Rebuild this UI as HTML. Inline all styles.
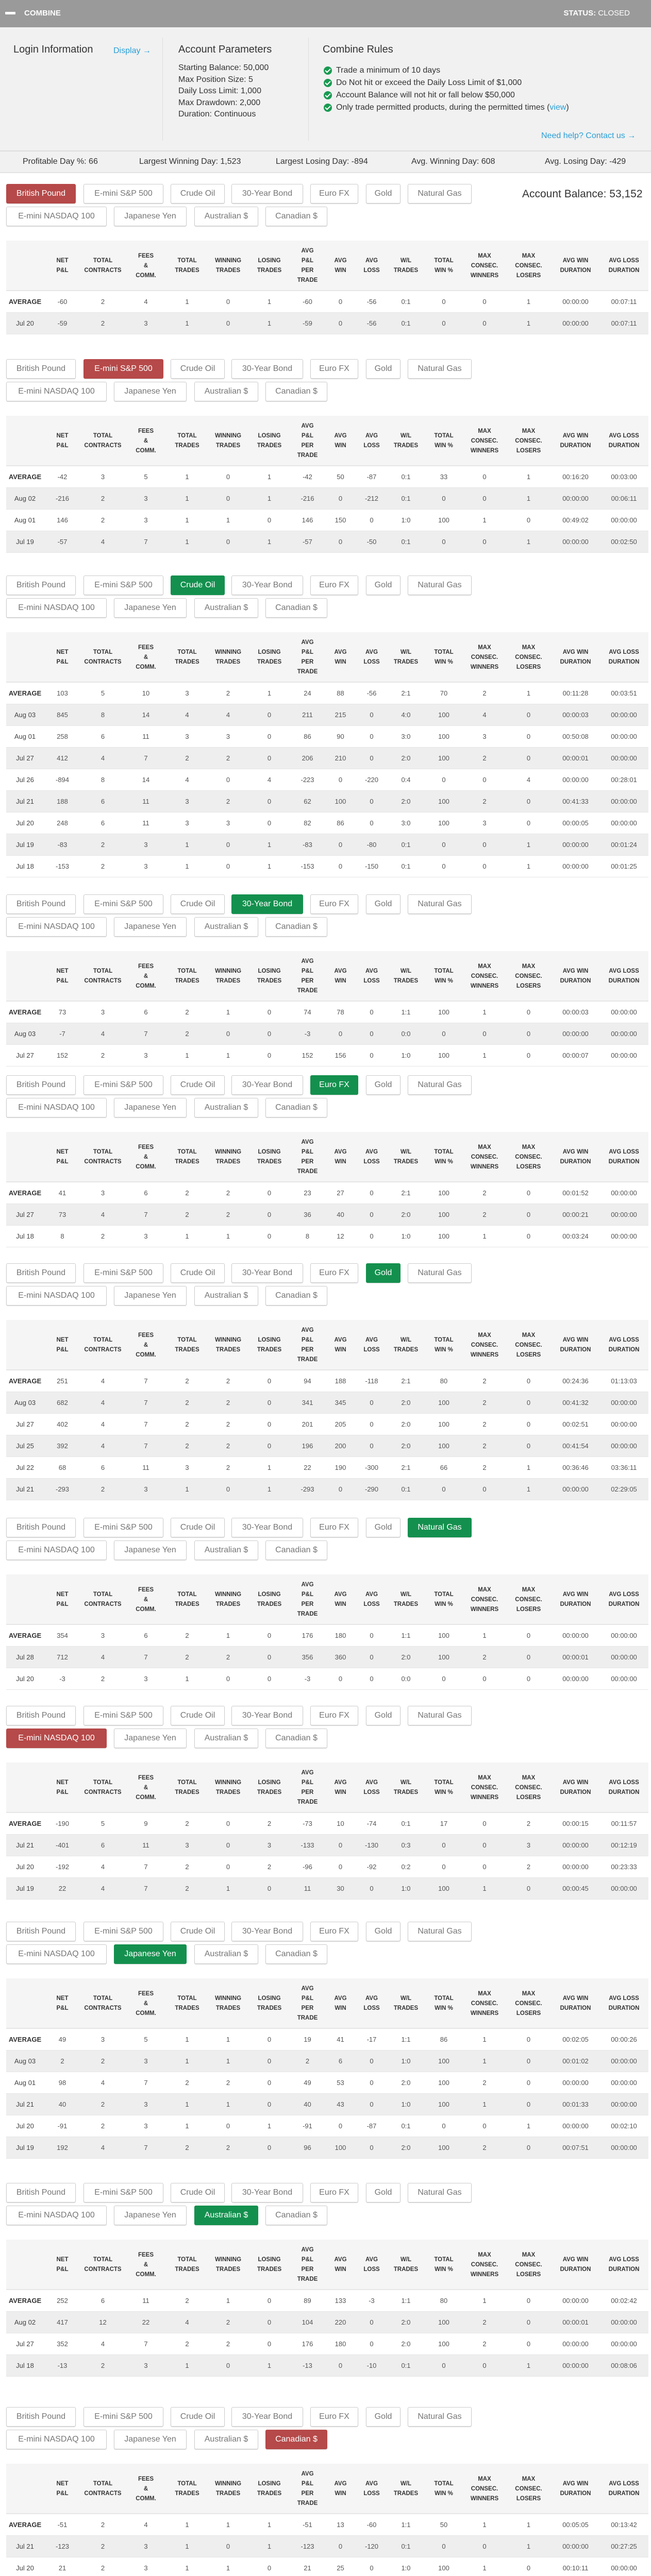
<!DOCTYPE html>
<html><head><meta charset="utf-8">
<style>
*{box-sizing:border-box;margin:0;padding:0}
html{width:1263px;height:5029px;overflow:hidden}
body{width:1263px;height:5029px;position:relative;background:#fff;font-family:"Liberation Sans",Arial,sans-serif;color:#333;overflow:hidden}
.hdr{position:absolute;left:0;top:0;width:1263px;height:53px;background:#9a9a9a;color:#fff}
.hdr .minus{position:absolute;left:10px;top:23px;width:20px;height:5px;background:#fff;border-radius:1px}
.hdr .t{position:absolute;left:47px;top:17px;font-size:15px;font-weight:bold}
.hdr .s{position:absolute;right:41px;top:17px;font-size:15px}
.info{position:absolute;left:0;top:53px;width:1263px;height:239px;background:#f1f1f1}
.vl{position:absolute;width:1px;height:200px;background:#ddd}
.h3{position:absolute;font-size:20px;color:#333}
.lnk{color:#2a9fd6}
.ap{position:absolute;left:346px;top:68px;font-size:16px;line-height:22.5px;color:#333}
.rules{position:absolute;left:628px;top:72px;font-size:16px;line-height:24px;white-space:nowrap}
.rules div{position:relative;padding-left:24px}
.ck{position:absolute;left:0;top:4px;width:16px;height:16px;border-radius:50%;background:#1a9a52}
.ck:after{content:"";position:absolute;left:5px;top:2px;width:4px;height:8px;border:solid #fff;border-width:0 2px 2px 0;transform:rotate(45deg)}
.stats{position:absolute;left:0;top:292px;width:1263px;height:44px;background:#f1f1f1;border-top:2px solid #ddd;border-bottom:2px solid #e3e3e3;font-size:16px}
.stats span{position:absolute;top:11px}
.sec{position:absolute;left:0;width:1263px}
.b{position:absolute;height:38px;border:1px solid #ccc;border-radius:3px;background:#fff;color:#777;font-size:16px;line-height:36px;text-align:center;box-shadow:0 1px 1px rgba(0,0,0,.15)}
.b.r{background:#b64949;border-color:#b64949;color:#fff}
.b.g{background:#14904e;border-color:#14904e;color:#fff}
.bal{position:absolute;left:1013px;top:8px;font-size:21px;color:#333}
table{position:absolute;left:12px;top:110px;width:1246px;border-collapse:separate;border-spacing:0;table-layout:fixed}
tr.h{height:98px}
tr{height:42px}
th{height:98px;padding:0;background:#f5f5f5;font-size:11.5px;font-weight:bold;line-height:19px;text-align:center;vertical-align:middle;box-shadow:inset 0 -2px #e6e6e6;color:#333;border:0}
td{height:42px;padding:0;font-size:13px;line-height:16px;text-align:center;vertical-align:middle;color:#555;box-shadow:inset 0 -1px #e6e6e6;border:0}
tr.e td{background:#eee}
td:first-child{color:#444}
tr.a td:first-child{font-weight:bold;color:#333}
</style></head><body>
<div class="hdr"><div class="minus"></div><div class="t">COMBINE</div><div class="s"><b>STATUS:</b> CLOSED</div></div>
<div class="info">
<div class="h3" style="left:26px;top:32px">Login Information</div>
<div class="lnk" style="position:absolute;left:220px;top:37px;font-size:16px">Display →</div>
<div class="vl" style="left:315px;top:20px"></div>
<div class="vl" style="left:598px;top:20px"></div>
<div class="h3" style="left:346px;top:32px">Account Parameters</div>
<div class="ap">Starting Balance: 50,000<br>Max Position Size: 5<br>Daily Loss Limit: 1,000<br>Max Drawdown: 2,000<br>Duration: Continuous</div>
<div class="h3" style="left:626px;top:32px">Combine Rules</div>
<div class="rules">
<div><span class="ck"></span>Trade a minimum of 10 days</div>
<div><span class="ck"></span>Do Not hit or exceed the Daily Loss Limit of $1,000</div>
<div><span class="ck"></span>Account Balance will not hit or fall below $50,000</div>
<div><span class="ck"></span>Only trade permitted products, during the permitted times (<span class="lnk">view</span>)</div>
</div>
<div class="lnk" style="position:absolute;left:1050px;top:202px;font-size:16px">Need help? Contact us →</div>
</div>
<div class="stats"><span style="left:44px">Profitable Day %: 66</span><span style="left:270px">Largest Winning Day: 1,523</span><span style="left:535px">Largest Losing Day: -894</span><span style="left:798px">Avg. Winning Day: 608</span><span style="left:1057px">Avg. Losing Day: -429</span></div>

<div class="sec" style="top:357px">
<div class="b r" style="left:12px;top:0;width:135px">British Pound</div><div class="b" style="left:162px;top:0;width:155px">E-mini S&amp;P 500</div><div class="b" style="left:331px;top:0;width:105px">Crude Oil</div><div class="b" style="left:449px;top:0;width:139px">30-Year Bond</div><div class="b" style="left:602px;top:0;width:93px">Euro FX</div><div class="b" style="left:710px;top:0;width:67px">Gold</div><div class="b" style="left:791px;top:0;width:124px">Natural Gas</div>
<div class="b" style="left:12px;top:44px;width:195px">E-mini NASDAQ 100</div><div class="b" style="left:221px;top:44px;width:141px">Japanese Yen</div><div class="b" style="left:377px;top:44px;width:124px">Australian $</div><div class="b" style="left:515px;top:44px;width:120px">Canadian $</div>
<div class="bal">Account Balance: 53,152</div>
<table><colgroup><col style="width:73px"><col style="width:72px"><col style="width:85px"><col style="width:82px"><col style="width:78px"><col style="width:81px"><col style="width:79px"><col style="width:69px"><col style="width:59px"><col style="width:62px"><col style="width:71px"><col style="width:76px"><col style="width:82px"><col style="width:89px"><col style="width:93px"><col style="width:95px"></colgroup>
<tr class="h"><th></th><th>NET<br>P&amp;L</th><th>TOTAL<br>CONTRACTS</th><th>FEES<br>&amp;<br>COMM.</th><th>TOTAL<br>TRADES</th><th>WINNING<br>TRADES</th><th>LOSING<br>TRADES</th><th>AVG<br>P&amp;L<br>PER<br>TRADE</th><th>AVG<br>WIN</th><th>AVG<br>LOSS</th><th>W/L<br>TRADES</th><th>TOTAL<br>WIN %</th><th>MAX<br>CONSEC.<br>WINNERS</th><th>MAX<br>CONSEC.<br>LOSERS</th><th>AVG WIN<br>DURATION</th><th>AVG LOSS<br>DURATION</th></tr>
<tr class="a"><td>AVERAGE</td><td>-60</td><td>2</td><td>4</td><td>1</td><td>0</td><td>1</td><td>-60</td><td>0</td><td>-56</td><td>0:1</td><td>0</td><td>0</td><td>1</td><td>00:00:00</td><td>00:07:11</td></tr>
<tr class="e"><td>Jul 20</td><td>-59</td><td>2</td><td>3</td><td>1</td><td>0</td><td>1</td><td>-59</td><td>0</td><td>-56</td><td>0:1</td><td>0</td><td>0</td><td>1</td><td>00:00:00</td><td>00:07:11</td></tr>
</table></div>

<div class="sec" style="top:697px">
<div class="b" style="left:12px;top:0;width:135px">British Pound</div><div class="b r" style="left:162px;top:0;width:155px">E-mini S&amp;P 500</div><div class="b" style="left:331px;top:0;width:105px">Crude Oil</div><div class="b" style="left:449px;top:0;width:139px">30-Year Bond</div><div class="b" style="left:602px;top:0;width:93px">Euro FX</div><div class="b" style="left:710px;top:0;width:67px">Gold</div><div class="b" style="left:791px;top:0;width:124px">Natural Gas</div>
<div class="b" style="left:12px;top:44px;width:195px">E-mini NASDAQ 100</div><div class="b" style="left:221px;top:44px;width:141px">Japanese Yen</div><div class="b" style="left:377px;top:44px;width:124px">Australian $</div><div class="b" style="left:515px;top:44px;width:120px">Canadian $</div>
<table><colgroup><col style="width:73px"><col style="width:72px"><col style="width:85px"><col style="width:82px"><col style="width:78px"><col style="width:81px"><col style="width:79px"><col style="width:69px"><col style="width:59px"><col style="width:62px"><col style="width:71px"><col style="width:76px"><col style="width:82px"><col style="width:89px"><col style="width:93px"><col style="width:95px"></colgroup>
<tr class="h"><th></th><th>NET<br>P&amp;L</th><th>TOTAL<br>CONTRACTS</th><th>FEES<br>&amp;<br>COMM.</th><th>TOTAL<br>TRADES</th><th>WINNING<br>TRADES</th><th>LOSING<br>TRADES</th><th>AVG<br>P&amp;L<br>PER<br>TRADE</th><th>AVG<br>WIN</th><th>AVG<br>LOSS</th><th>W/L<br>TRADES</th><th>TOTAL<br>WIN %</th><th>MAX<br>CONSEC.<br>WINNERS</th><th>MAX<br>CONSEC.<br>LOSERS</th><th>AVG WIN<br>DURATION</th><th>AVG LOSS<br>DURATION</th></tr>
<tr class="a"><td>AVERAGE</td><td>-42</td><td>3</td><td>5</td><td>1</td><td>0</td><td>1</td><td>-42</td><td>50</td><td>-87</td><td>0:1</td><td>33</td><td>0</td><td>1</td><td>00:16:20</td><td>00:03:00</td></tr>
<tr class="e"><td>Aug 02</td><td>-216</td><td>2</td><td>3</td><td>1</td><td>0</td><td>1</td><td>-216</td><td>0</td><td>-212</td><td>0:1</td><td>0</td><td>0</td><td>1</td><td>00:00:00</td><td>00:06:11</td></tr>
<tr><td>Aug 01</td><td>146</td><td>2</td><td>3</td><td>1</td><td>1</td><td>0</td><td>146</td><td>150</td><td>0</td><td>1:0</td><td>100</td><td>1</td><td>0</td><td>00:49:02</td><td>00:00:00</td></tr>
<tr class="e"><td>Jul 19</td><td>-57</td><td>4</td><td>7</td><td>1</td><td>0</td><td>1</td><td>-57</td><td>0</td><td>-50</td><td>0:1</td><td>0</td><td>0</td><td>1</td><td>00:00:00</td><td>00:02:50</td></tr>
</table></div>

<div class="sec" style="top:1117px">
<div class="b" style="left:12px;top:0;width:135px">British Pound</div><div class="b" style="left:162px;top:0;width:155px">E-mini S&amp;P 500</div><div class="b g" style="left:331px;top:0;width:105px">Crude Oil</div><div class="b" style="left:449px;top:0;width:139px">30-Year Bond</div><div class="b" style="left:602px;top:0;width:93px">Euro FX</div><div class="b" style="left:710px;top:0;width:67px">Gold</div><div class="b" style="left:791px;top:0;width:124px">Natural Gas</div>
<div class="b" style="left:12px;top:44px;width:195px">E-mini NASDAQ 100</div><div class="b" style="left:221px;top:44px;width:141px">Japanese Yen</div><div class="b" style="left:377px;top:44px;width:124px">Australian $</div><div class="b" style="left:515px;top:44px;width:120px">Canadian $</div>
<table><colgroup><col style="width:73px"><col style="width:72px"><col style="width:85px"><col style="width:82px"><col style="width:78px"><col style="width:81px"><col style="width:79px"><col style="width:69px"><col style="width:59px"><col style="width:62px"><col style="width:71px"><col style="width:76px"><col style="width:82px"><col style="width:89px"><col style="width:93px"><col style="width:95px"></colgroup>
<tr class="h"><th></th><th>NET<br>P&amp;L</th><th>TOTAL<br>CONTRACTS</th><th>FEES<br>&amp;<br>COMM.</th><th>TOTAL<br>TRADES</th><th>WINNING<br>TRADES</th><th>LOSING<br>TRADES</th><th>AVG<br>P&amp;L<br>PER<br>TRADE</th><th>AVG<br>WIN</th><th>AVG<br>LOSS</th><th>W/L<br>TRADES</th><th>TOTAL<br>WIN %</th><th>MAX<br>CONSEC.<br>WINNERS</th><th>MAX<br>CONSEC.<br>LOSERS</th><th>AVG WIN<br>DURATION</th><th>AVG LOSS<br>DURATION</th></tr>
<tr class="a"><td>AVERAGE</td><td>103</td><td>5</td><td>10</td><td>3</td><td>2</td><td>1</td><td>24</td><td>88</td><td>-56</td><td>2:1</td><td>70</td><td>2</td><td>1</td><td>00:11:28</td><td>00:03:51</td></tr>
<tr class="e"><td>Aug 03</td><td>845</td><td>8</td><td>14</td><td>4</td><td>4</td><td>0</td><td>211</td><td>215</td><td>0</td><td>4:0</td><td>100</td><td>4</td><td>0</td><td>00:00:03</td><td>00:00:00</td></tr>
<tr><td>Aug 01</td><td>258</td><td>6</td><td>11</td><td>3</td><td>3</td><td>0</td><td>86</td><td>90</td><td>0</td><td>3:0</td><td>100</td><td>3</td><td>0</td><td>00:50:08</td><td>00:00:00</td></tr>
<tr class="e"><td>Jul 27</td><td>412</td><td>4</td><td>7</td><td>2</td><td>2</td><td>0</td><td>206</td><td>210</td><td>0</td><td>2:0</td><td>100</td><td>2</td><td>0</td><td>00:00:01</td><td>00:00:00</td></tr>
<tr><td>Jul 26</td><td>-894</td><td>8</td><td>14</td><td>4</td><td>0</td><td>4</td><td>-223</td><td>0</td><td>-220</td><td>0:4</td><td>0</td><td>0</td><td>4</td><td>00:00:00</td><td>00:28:01</td></tr>
<tr class="e"><td>Jul 21</td><td>188</td><td>6</td><td>11</td><td>3</td><td>2</td><td>0</td><td>62</td><td>100</td><td>0</td><td>2:0</td><td>100</td><td>2</td><td>0</td><td>00:41:33</td><td>00:00:00</td></tr>
<tr><td>Jul 20</td><td>248</td><td>6</td><td>11</td><td>3</td><td>3</td><td>0</td><td>82</td><td>86</td><td>0</td><td>3:0</td><td>100</td><td>3</td><td>0</td><td>00:00:05</td><td>00:00:00</td></tr>
<tr class="e"><td>Jul 19</td><td>-83</td><td>2</td><td>3</td><td>1</td><td>0</td><td>1</td><td>-83</td><td>0</td><td>-80</td><td>0:1</td><td>0</td><td>0</td><td>1</td><td>00:00:00</td><td>00:01:24</td></tr>
<tr><td>Jul 18</td><td>-153</td><td>2</td><td>3</td><td>1</td><td>0</td><td>1</td><td>-153</td><td>0</td><td>-150</td><td>0:1</td><td>0</td><td>0</td><td>1</td><td>00:00:00</td><td>00:01:25</td></tr>
</table></div>

<div class="sec" style="top:1736px">
<div class="b" style="left:12px;top:0;width:135px">British Pound</div><div class="b" style="left:162px;top:0;width:155px">E-mini S&amp;P 500</div><div class="b" style="left:331px;top:0;width:105px">Crude Oil</div><div class="b g" style="left:449px;top:0;width:139px">30-Year Bond</div><div class="b" style="left:602px;top:0;width:93px">Euro FX</div><div class="b" style="left:710px;top:0;width:67px">Gold</div><div class="b" style="left:791px;top:0;width:124px">Natural Gas</div>
<div class="b" style="left:12px;top:44px;width:195px">E-mini NASDAQ 100</div><div class="b" style="left:221px;top:44px;width:141px">Japanese Yen</div><div class="b" style="left:377px;top:44px;width:124px">Australian $</div><div class="b" style="left:515px;top:44px;width:120px">Canadian $</div>
<table><colgroup><col style="width:73px"><col style="width:72px"><col style="width:85px"><col style="width:82px"><col style="width:78px"><col style="width:81px"><col style="width:79px"><col style="width:69px"><col style="width:59px"><col style="width:62px"><col style="width:71px"><col style="width:76px"><col style="width:82px"><col style="width:89px"><col style="width:93px"><col style="width:95px"></colgroup>
<tr class="h"><th></th><th>NET<br>P&amp;L</th><th>TOTAL<br>CONTRACTS</th><th>FEES<br>&amp;<br>COMM.</th><th>TOTAL<br>TRADES</th><th>WINNING<br>TRADES</th><th>LOSING<br>TRADES</th><th>AVG<br>P&amp;L<br>PER<br>TRADE</th><th>AVG<br>WIN</th><th>AVG<br>LOSS</th><th>W/L<br>TRADES</th><th>TOTAL<br>WIN %</th><th>MAX<br>CONSEC.<br>WINNERS</th><th>MAX<br>CONSEC.<br>LOSERS</th><th>AVG WIN<br>DURATION</th><th>AVG LOSS<br>DURATION</th></tr>
<tr class="a"><td>AVERAGE</td><td>73</td><td>3</td><td>6</td><td>2</td><td>1</td><td>0</td><td>74</td><td>78</td><td>0</td><td>1:1</td><td>100</td><td>1</td><td>0</td><td>00:00:03</td><td>00:00:00</td></tr>
<tr class="e"><td>Aug 03</td><td>-7</td><td>4</td><td>7</td><td>2</td><td>0</td><td>0</td><td>-3</td><td>0</td><td>0</td><td>0:0</td><td>0</td><td>0</td><td>0</td><td>00:00:00</td><td>00:00:00</td></tr>
<tr><td>Jul 27</td><td>152</td><td>2</td><td>3</td><td>1</td><td>1</td><td>0</td><td>152</td><td>156</td><td>0</td><td>1:0</td><td>100</td><td>1</td><td>0</td><td>00:00:07</td><td>00:00:00</td></tr>
</table></div>

<div class="sec" style="top:2087px">
<div class="b" style="left:12px;top:0;width:135px">British Pound</div><div class="b" style="left:162px;top:0;width:155px">E-mini S&amp;P 500</div><div class="b" style="left:331px;top:0;width:105px">Crude Oil</div><div class="b" style="left:449px;top:0;width:139px">30-Year Bond</div><div class="b g" style="left:602px;top:0;width:93px">Euro FX</div><div class="b" style="left:710px;top:0;width:67px">Gold</div><div class="b" style="left:791px;top:0;width:124px">Natural Gas</div>
<div class="b" style="left:12px;top:44px;width:195px">E-mini NASDAQ 100</div><div class="b" style="left:221px;top:44px;width:141px">Japanese Yen</div><div class="b" style="left:377px;top:44px;width:124px">Australian $</div><div class="b" style="left:515px;top:44px;width:120px">Canadian $</div>
<table><colgroup><col style="width:73px"><col style="width:72px"><col style="width:85px"><col style="width:82px"><col style="width:78px"><col style="width:81px"><col style="width:79px"><col style="width:69px"><col style="width:59px"><col style="width:62px"><col style="width:71px"><col style="width:76px"><col style="width:82px"><col style="width:89px"><col style="width:93px"><col style="width:95px"></colgroup>
<tr class="h"><th></th><th>NET<br>P&amp;L</th><th>TOTAL<br>CONTRACTS</th><th>FEES<br>&amp;<br>COMM.</th><th>TOTAL<br>TRADES</th><th>WINNING<br>TRADES</th><th>LOSING<br>TRADES</th><th>AVG<br>P&amp;L<br>PER<br>TRADE</th><th>AVG<br>WIN</th><th>AVG<br>LOSS</th><th>W/L<br>TRADES</th><th>TOTAL<br>WIN %</th><th>MAX<br>CONSEC.<br>WINNERS</th><th>MAX<br>CONSEC.<br>LOSERS</th><th>AVG WIN<br>DURATION</th><th>AVG LOSS<br>DURATION</th></tr>
<tr class="a"><td>AVERAGE</td><td>41</td><td>3</td><td>6</td><td>2</td><td>2</td><td>0</td><td>23</td><td>27</td><td>0</td><td>2:1</td><td>100</td><td>2</td><td>0</td><td>00:01:52</td><td>00:00:00</td></tr>
<tr class="e"><td>Jul 27</td><td>73</td><td>4</td><td>7</td><td>2</td><td>2</td><td>0</td><td>36</td><td>40</td><td>0</td><td>2:0</td><td>100</td><td>2</td><td>0</td><td>00:00:21</td><td>00:00:00</td></tr>
<tr><td>Jul 18</td><td>8</td><td>2</td><td>3</td><td>1</td><td>1</td><td>0</td><td>8</td><td>12</td><td>0</td><td>1:0</td><td>100</td><td>1</td><td>0</td><td>00:03:24</td><td>00:00:00</td></tr>
</table></div>

<div class="sec" style="top:2452px">
<div class="b" style="left:12px;top:0;width:135px">British Pound</div><div class="b" style="left:162px;top:0;width:155px">E-mini S&amp;P 500</div><div class="b" style="left:331px;top:0;width:105px">Crude Oil</div><div class="b" style="left:449px;top:0;width:139px">30-Year Bond</div><div class="b" style="left:602px;top:0;width:93px">Euro FX</div><div class="b g" style="left:710px;top:0;width:67px">Gold</div><div class="b" style="left:791px;top:0;width:124px">Natural Gas</div>
<div class="b" style="left:12px;top:44px;width:195px">E-mini NASDAQ 100</div><div class="b" style="left:221px;top:44px;width:141px">Japanese Yen</div><div class="b" style="left:377px;top:44px;width:124px">Australian $</div><div class="b" style="left:515px;top:44px;width:120px">Canadian $</div>
<table><colgroup><col style="width:73px"><col style="width:72px"><col style="width:85px"><col style="width:82px"><col style="width:78px"><col style="width:81px"><col style="width:79px"><col style="width:69px"><col style="width:59px"><col style="width:62px"><col style="width:71px"><col style="width:76px"><col style="width:82px"><col style="width:89px"><col style="width:93px"><col style="width:95px"></colgroup>
<tr class="h"><th></th><th>NET<br>P&amp;L</th><th>TOTAL<br>CONTRACTS</th><th>FEES<br>&amp;<br>COMM.</th><th>TOTAL<br>TRADES</th><th>WINNING<br>TRADES</th><th>LOSING<br>TRADES</th><th>AVG<br>P&amp;L<br>PER<br>TRADE</th><th>AVG<br>WIN</th><th>AVG<br>LOSS</th><th>W/L<br>TRADES</th><th>TOTAL<br>WIN %</th><th>MAX<br>CONSEC.<br>WINNERS</th><th>MAX<br>CONSEC.<br>LOSERS</th><th>AVG WIN<br>DURATION</th><th>AVG LOSS<br>DURATION</th></tr>
<tr class="a"><td>AVERAGE</td><td>251</td><td>4</td><td>7</td><td>2</td><td>2</td><td>0</td><td>94</td><td>188</td><td>-118</td><td>2:1</td><td>80</td><td>2</td><td>0</td><td>00:24:36</td><td>01:13:03</td></tr>
<tr class="e"><td>Aug 03</td><td>682</td><td>4</td><td>7</td><td>2</td><td>2</td><td>0</td><td>341</td><td>345</td><td>0</td><td>2:0</td><td>100</td><td>2</td><td>0</td><td>00:41:32</td><td>00:00:00</td></tr>
<tr><td>Jul 27</td><td>402</td><td>4</td><td>7</td><td>2</td><td>2</td><td>0</td><td>201</td><td>205</td><td>0</td><td>2:0</td><td>100</td><td>2</td><td>0</td><td>00:02:51</td><td>00:00:00</td></tr>
<tr class="e"><td>Jul 25</td><td>392</td><td>4</td><td>7</td><td>2</td><td>2</td><td>0</td><td>196</td><td>200</td><td>0</td><td>2:0</td><td>100</td><td>2</td><td>0</td><td>00:41:54</td><td>00:00:00</td></tr>
<tr><td>Jul 22</td><td>68</td><td>6</td><td>11</td><td>3</td><td>2</td><td>1</td><td>22</td><td>190</td><td>-300</td><td>2:1</td><td>66</td><td>2</td><td>1</td><td>00:36:46</td><td>03:36:11</td></tr>
<tr class="e"><td>Jul 21</td><td>-293</td><td>2</td><td>3</td><td>1</td><td>0</td><td>1</td><td>-293</td><td>0</td><td>-290</td><td>0:1</td><td>0</td><td>0</td><td>1</td><td>00:00:00</td><td>02:29:05</td></tr>
</table></div>

<div class="sec" style="top:2946px">
<div class="b" style="left:12px;top:0;width:135px">British Pound</div><div class="b" style="left:162px;top:0;width:155px">E-mini S&amp;P 500</div><div class="b" style="left:331px;top:0;width:105px">Crude Oil</div><div class="b" style="left:449px;top:0;width:139px">30-Year Bond</div><div class="b" style="left:602px;top:0;width:93px">Euro FX</div><div class="b" style="left:710px;top:0;width:67px">Gold</div><div class="b g" style="left:791px;top:0;width:124px">Natural Gas</div>
<div class="b" style="left:12px;top:44px;width:195px">E-mini NASDAQ 100</div><div class="b" style="left:221px;top:44px;width:141px">Japanese Yen</div><div class="b" style="left:377px;top:44px;width:124px">Australian $</div><div class="b" style="left:515px;top:44px;width:120px">Canadian $</div>
<table><colgroup><col style="width:73px"><col style="width:72px"><col style="width:85px"><col style="width:82px"><col style="width:78px"><col style="width:81px"><col style="width:79px"><col style="width:69px"><col style="width:59px"><col style="width:62px"><col style="width:71px"><col style="width:76px"><col style="width:82px"><col style="width:89px"><col style="width:93px"><col style="width:95px"></colgroup>
<tr class="h"><th></th><th>NET<br>P&amp;L</th><th>TOTAL<br>CONTRACTS</th><th>FEES<br>&amp;<br>COMM.</th><th>TOTAL<br>TRADES</th><th>WINNING<br>TRADES</th><th>LOSING<br>TRADES</th><th>AVG<br>P&amp;L<br>PER<br>TRADE</th><th>AVG<br>WIN</th><th>AVG<br>LOSS</th><th>W/L<br>TRADES</th><th>TOTAL<br>WIN %</th><th>MAX<br>CONSEC.<br>WINNERS</th><th>MAX<br>CONSEC.<br>LOSERS</th><th>AVG WIN<br>DURATION</th><th>AVG LOSS<br>DURATION</th></tr>
<tr class="a"><td>AVERAGE</td><td>354</td><td>3</td><td>6</td><td>2</td><td>1</td><td>0</td><td>176</td><td>180</td><td>0</td><td>1:1</td><td>100</td><td>1</td><td>0</td><td>00:00:00</td><td>00:00:00</td></tr>
<tr class="e"><td>Jul 28</td><td>712</td><td>4</td><td>7</td><td>2</td><td>2</td><td>0</td><td>356</td><td>360</td><td>0</td><td>2:0</td><td>100</td><td>2</td><td>0</td><td>00:00:01</td><td>00:00:00</td></tr>
<tr><td>Jul 20</td><td>-3</td><td>2</td><td>3</td><td>1</td><td>0</td><td>0</td><td>-3</td><td>0</td><td>0</td><td>0:0</td><td>0</td><td>0</td><td>0</td><td>00:00:00</td><td>00:00:00</td></tr>
</table></div>

<div class="sec" style="top:3311px">
<div class="b" style="left:12px;top:0;width:135px">British Pound</div><div class="b" style="left:162px;top:0;width:155px">E-mini S&amp;P 500</div><div class="b" style="left:331px;top:0;width:105px">Crude Oil</div><div class="b" style="left:449px;top:0;width:139px">30-Year Bond</div><div class="b" style="left:602px;top:0;width:93px">Euro FX</div><div class="b" style="left:710px;top:0;width:67px">Gold</div><div class="b" style="left:791px;top:0;width:124px">Natural Gas</div>
<div class="b r" style="left:12px;top:44px;width:195px">E-mini NASDAQ 100</div><div class="b" style="left:221px;top:44px;width:141px">Japanese Yen</div><div class="b" style="left:377px;top:44px;width:124px">Australian $</div><div class="b" style="left:515px;top:44px;width:120px">Canadian $</div>
<table><colgroup><col style="width:73px"><col style="width:72px"><col style="width:85px"><col style="width:82px"><col style="width:78px"><col style="width:81px"><col style="width:79px"><col style="width:69px"><col style="width:59px"><col style="width:62px"><col style="width:71px"><col style="width:76px"><col style="width:82px"><col style="width:89px"><col style="width:93px"><col style="width:95px"></colgroup>
<tr class="h"><th></th><th>NET<br>P&amp;L</th><th>TOTAL<br>CONTRACTS</th><th>FEES<br>&amp;<br>COMM.</th><th>TOTAL<br>TRADES</th><th>WINNING<br>TRADES</th><th>LOSING<br>TRADES</th><th>AVG<br>P&amp;L<br>PER<br>TRADE</th><th>AVG<br>WIN</th><th>AVG<br>LOSS</th><th>W/L<br>TRADES</th><th>TOTAL<br>WIN %</th><th>MAX<br>CONSEC.<br>WINNERS</th><th>MAX<br>CONSEC.<br>LOSERS</th><th>AVG WIN<br>DURATION</th><th>AVG LOSS<br>DURATION</th></tr>
<tr class="a"><td>AVERAGE</td><td>-190</td><td>5</td><td>9</td><td>2</td><td>0</td><td>2</td><td>-73</td><td>10</td><td>-74</td><td>0:1</td><td>17</td><td>0</td><td>2</td><td>00:00:15</td><td>00:11:57</td></tr>
<tr class="e"><td>Jul 21</td><td>-401</td><td>6</td><td>11</td><td>3</td><td>0</td><td>3</td><td>-133</td><td>0</td><td>-130</td><td>0:3</td><td>0</td><td>0</td><td>3</td><td>00:00:00</td><td>00:12:19</td></tr>
<tr><td>Jul 20</td><td>-192</td><td>4</td><td>7</td><td>2</td><td>0</td><td>2</td><td>-96</td><td>0</td><td>-92</td><td>0:2</td><td>0</td><td>0</td><td>2</td><td>00:00:00</td><td>00:23:33</td></tr>
<tr class="e"><td>Jul 19</td><td>22</td><td>4</td><td>7</td><td>2</td><td>1</td><td>0</td><td>11</td><td>30</td><td>0</td><td>1:0</td><td>100</td><td>1</td><td>0</td><td>00:00:45</td><td>00:00:00</td></tr>
</table></div>

<div class="sec" style="top:3730px">
<div class="b" style="left:12px;top:0;width:135px">British Pound</div><div class="b" style="left:162px;top:0;width:155px">E-mini S&amp;P 500</div><div class="b" style="left:331px;top:0;width:105px">Crude Oil</div><div class="b" style="left:449px;top:0;width:139px">30-Year Bond</div><div class="b" style="left:602px;top:0;width:93px">Euro FX</div><div class="b" style="left:710px;top:0;width:67px">Gold</div><div class="b" style="left:791px;top:0;width:124px">Natural Gas</div>
<div class="b" style="left:12px;top:44px;width:195px">E-mini NASDAQ 100</div><div class="b g" style="left:221px;top:44px;width:141px">Japanese Yen</div><div class="b" style="left:377px;top:44px;width:124px">Australian $</div><div class="b" style="left:515px;top:44px;width:120px">Canadian $</div>
<table><colgroup><col style="width:73px"><col style="width:72px"><col style="width:85px"><col style="width:82px"><col style="width:78px"><col style="width:81px"><col style="width:79px"><col style="width:69px"><col style="width:59px"><col style="width:62px"><col style="width:71px"><col style="width:76px"><col style="width:82px"><col style="width:89px"><col style="width:93px"><col style="width:95px"></colgroup>
<tr class="h"><th></th><th>NET<br>P&amp;L</th><th>TOTAL<br>CONTRACTS</th><th>FEES<br>&amp;<br>COMM.</th><th>TOTAL<br>TRADES</th><th>WINNING<br>TRADES</th><th>LOSING<br>TRADES</th><th>AVG<br>P&amp;L<br>PER<br>TRADE</th><th>AVG<br>WIN</th><th>AVG<br>LOSS</th><th>W/L<br>TRADES</th><th>TOTAL<br>WIN %</th><th>MAX<br>CONSEC.<br>WINNERS</th><th>MAX<br>CONSEC.<br>LOSERS</th><th>AVG WIN<br>DURATION</th><th>AVG LOSS<br>DURATION</th></tr>
<tr class="a"><td>AVERAGE</td><td>49</td><td>3</td><td>5</td><td>1</td><td>1</td><td>0</td><td>19</td><td>41</td><td>-17</td><td>1:1</td><td>86</td><td>1</td><td>0</td><td>00:02:05</td><td>00:00:26</td></tr>
<tr class="e"><td>Aug 03</td><td>2</td><td>2</td><td>3</td><td>1</td><td>1</td><td>0</td><td>2</td><td>6</td><td>0</td><td>1:0</td><td>100</td><td>1</td><td>0</td><td>00:01:02</td><td>00:00:00</td></tr>
<tr><td>Aug 01</td><td>98</td><td>4</td><td>7</td><td>2</td><td>2</td><td>0</td><td>49</td><td>53</td><td>0</td><td>2:0</td><td>100</td><td>2</td><td>0</td><td>00:00:00</td><td>00:00:00</td></tr>
<tr class="e"><td>Jul 21</td><td>40</td><td>2</td><td>3</td><td>1</td><td>1</td><td>0</td><td>40</td><td>43</td><td>0</td><td>1:0</td><td>100</td><td>1</td><td>0</td><td>00:01:33</td><td>00:00:00</td></tr>
<tr><td>Jul 20</td><td>-91</td><td>2</td><td>3</td><td>1</td><td>0</td><td>1</td><td>-91</td><td>0</td><td>-87</td><td>0:1</td><td>0</td><td>0</td><td>1</td><td>00:00:00</td><td>00:02:10</td></tr>
<tr class="e"><td>Jul 19</td><td>192</td><td>4</td><td>7</td><td>2</td><td>2</td><td>0</td><td>96</td><td>100</td><td>0</td><td>2:0</td><td>100</td><td>2</td><td>0</td><td>00:07:51</td><td>00:00:00</td></tr>
</table></div>

<div class="sec" style="top:4237px">
<div class="b" style="left:12px;top:0;width:135px">British Pound</div><div class="b" style="left:162px;top:0;width:155px">E-mini S&amp;P 500</div><div class="b" style="left:331px;top:0;width:105px">Crude Oil</div><div class="b" style="left:449px;top:0;width:139px">30-Year Bond</div><div class="b" style="left:602px;top:0;width:93px">Euro FX</div><div class="b" style="left:710px;top:0;width:67px">Gold</div><div class="b" style="left:791px;top:0;width:124px">Natural Gas</div>
<div class="b" style="left:12px;top:44px;width:195px">E-mini NASDAQ 100</div><div class="b" style="left:221px;top:44px;width:141px">Japanese Yen</div><div class="b g" style="left:377px;top:44px;width:124px">Australian $</div><div class="b" style="left:515px;top:44px;width:120px">Canadian $</div>
<table><colgroup><col style="width:73px"><col style="width:72px"><col style="width:85px"><col style="width:82px"><col style="width:78px"><col style="width:81px"><col style="width:79px"><col style="width:69px"><col style="width:59px"><col style="width:62px"><col style="width:71px"><col style="width:76px"><col style="width:82px"><col style="width:89px"><col style="width:93px"><col style="width:95px"></colgroup>
<tr class="h"><th></th><th>NET<br>P&amp;L</th><th>TOTAL<br>CONTRACTS</th><th>FEES<br>&amp;<br>COMM.</th><th>TOTAL<br>TRADES</th><th>WINNING<br>TRADES</th><th>LOSING<br>TRADES</th><th>AVG<br>P&amp;L<br>PER<br>TRADE</th><th>AVG<br>WIN</th><th>AVG<br>LOSS</th><th>W/L<br>TRADES</th><th>TOTAL<br>WIN %</th><th>MAX<br>CONSEC.<br>WINNERS</th><th>MAX<br>CONSEC.<br>LOSERS</th><th>AVG WIN<br>DURATION</th><th>AVG LOSS<br>DURATION</th></tr>
<tr class="a"><td>AVERAGE</td><td>252</td><td>6</td><td>11</td><td>2</td><td>1</td><td>0</td><td>89</td><td>133</td><td>-3</td><td>1:1</td><td>80</td><td>1</td><td>0</td><td>00:00:00</td><td>00:02:42</td></tr>
<tr class="e"><td>Aug 02</td><td>417</td><td>12</td><td>22</td><td>4</td><td>2</td><td>0</td><td>104</td><td>220</td><td>0</td><td>2:0</td><td>100</td><td>2</td><td>0</td><td>00:00:01</td><td>00:00:00</td></tr>
<tr><td>Jul 27</td><td>352</td><td>4</td><td>7</td><td>2</td><td>2</td><td>0</td><td>176</td><td>180</td><td>0</td><td>2:0</td><td>100</td><td>2</td><td>0</td><td>00:00:00</td><td>00:00:00</td></tr>
<tr class="e"><td>Jul 18</td><td>-13</td><td>2</td><td>3</td><td>1</td><td>0</td><td>1</td><td>-13</td><td>0</td><td>-10</td><td>0:1</td><td>0</td><td>0</td><td>1</td><td>00:00:00</td><td>00:08:06</td></tr>
</table></div>

<div class="sec" style="top:4672px">
<div class="b" style="left:12px;top:0;width:135px">British Pound</div><div class="b" style="left:162px;top:0;width:155px">E-mini S&amp;P 500</div><div class="b" style="left:331px;top:0;width:105px">Crude Oil</div><div class="b" style="left:449px;top:0;width:139px">30-Year Bond</div><div class="b" style="left:602px;top:0;width:93px">Euro FX</div><div class="b" style="left:710px;top:0;width:67px">Gold</div><div class="b" style="left:791px;top:0;width:124px">Natural Gas</div>
<div class="b" style="left:12px;top:44px;width:195px">E-mini NASDAQ 100</div><div class="b" style="left:221px;top:44px;width:141px">Japanese Yen</div><div class="b" style="left:377px;top:44px;width:124px">Australian $</div><div class="b r" style="left:515px;top:44px;width:120px">Canadian $</div>
<table><colgroup><col style="width:73px"><col style="width:72px"><col style="width:85px"><col style="width:82px"><col style="width:78px"><col style="width:81px"><col style="width:79px"><col style="width:69px"><col style="width:59px"><col style="width:62px"><col style="width:71px"><col style="width:76px"><col style="width:82px"><col style="width:89px"><col style="width:93px"><col style="width:95px"></colgroup>
<tr class="h"><th></th><th>NET<br>P&amp;L</th><th>TOTAL<br>CONTRACTS</th><th>FEES<br>&amp;<br>COMM.</th><th>TOTAL<br>TRADES</th><th>WINNING<br>TRADES</th><th>LOSING<br>TRADES</th><th>AVG<br>P&amp;L<br>PER<br>TRADE</th><th>AVG<br>WIN</th><th>AVG<br>LOSS</th><th>W/L<br>TRADES</th><th>TOTAL<br>WIN %</th><th>MAX<br>CONSEC.<br>WINNERS</th><th>MAX<br>CONSEC.<br>LOSERS</th><th>AVG WIN<br>DURATION</th><th>AVG LOSS<br>DURATION</th></tr>
<tr class="a"><td>AVERAGE</td><td>-51</td><td>2</td><td>4</td><td>1</td><td>1</td><td>1</td><td>-51</td><td>13</td><td>-60</td><td>1:1</td><td>50</td><td>1</td><td>1</td><td>00:05:05</td><td>00:13:42</td></tr>
<tr class="e"><td>Jul 21</td><td>-123</td><td>2</td><td>3</td><td>1</td><td>0</td><td>1</td><td>-123</td><td>0</td><td>-120</td><td>0:1</td><td>0</td><td>0</td><td>1</td><td>00:00:00</td><td>00:27:25</td></tr>
<tr><td>Jul 20</td><td>21</td><td>2</td><td>3</td><td>1</td><td>1</td><td>0</td><td>21</td><td>25</td><td>0</td><td>1:0</td><td>100</td><td>1</td><td>0</td><td>00:10:11</td><td>00:00:00</td></tr>
</table></div>
</body></html>
